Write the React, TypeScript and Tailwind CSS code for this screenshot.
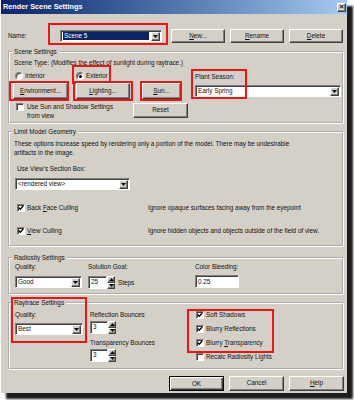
import type { ReactNode } from 'react'

const bevel =
  'bg-[#d4d0c8] border border-t-white border-l-white border-r-[#404040] border-b-[#404040] shadow-[inset_-1px_-1px_0_#808080]'
const sunken =
  'bg-white border border-t-[#808080] border-l-[#808080] border-r-white border-b-white shadow-[inset_1px_1px_0_#404040]'

function Red({ className }: { className: string }) {
  return <span className={`pointer-events-none absolute border-2 border-[#f01414] ${className}`} />
}

function Btn({ children, className = '' }: { children: ReactNode; className?: string }) {
  return <div className={`${bevel} flex items-center justify-center leading-none ${className}`}>{children}</div>
}

function Tri({ up = false }: { up?: boolean }) {
  return (
    <svg width="5" height="3" viewBox="0 0 5 3">
      <path d={up ? 'M0 3 L5 3 L2.5 0 Z' : 'M0 0 L5 0 L2.5 3 Z'} fill="#000" />
    </svg>
  )
}

function Combo({ value, className, selected = false }: { value: string; className: string; selected?: boolean }) {
  return (
    <div className={`${sunken} flex items-center pl-[2px] pr-[1px] ${className}`}>
      <span className={`flex-1 leading-[8px] ${selected ? 'bg-[#0a246a] text-white px-[1px] mr-[2px]' : ''}`}>{value}</span>
      <div className={`${bevel} w-[9px] h-[9px] flex items-center justify-center`}>
        <Tri />
      </div>
    </div>
  )
}

function Spin({ value, w = 'w-[18px]' }: { value: string; w?: string }) {
  return (
    <div className="flex h-[13px]">
      <div className={`${sunken} ${w} flex items-center pl-[2px] leading-none`}>{value}</div>
      <div className="flex w-[8px] flex-col">
        <div className={`${bevel} flex flex-1 items-center justify-center`}>
          <Tri up />
        </div>
        <div className={`${bevel} flex flex-1 items-center justify-center`}>
          <Tri />
        </div>
      </div>
    </div>
  )
}

function Check({ checked = false }: { checked?: boolean }) {
  return (
    <span className={`${sunken} flex h-[8px] w-[8px] shrink-0 items-center justify-center`}>
      {checked && (
        <svg width="6" height="6" viewBox="0 0 6 6">
          <path d="M0.8 2.6 L2.3 4.2 L5.2 1" stroke="#000" strokeWidth="1.3" fill="none" />
        </svg>
      )}
    </span>
  )
}

function Radio({ checked = false }: { checked?: boolean }) {
  return (
    <span className="flex h-[8px] w-[8px] shrink-0 items-center justify-center rounded-full border border-t-[#808080] border-l-[#808080] border-r-white border-b-white bg-white shadow-[inset_1px_1px_0_#404040]">
      {checked && <span className="h-[3px] w-[3px] rounded-full bg-black" />}
    </span>
  )
}

function Group({ title, className = '', children }: { title: string; className?: string; children: ReactNode }) {
  return (
    <fieldset className={`border-2 border-white [border-style:groove] pl-[4px] pr-[1px] ${className}`}>
      <legend className="-ml-[2px] px-[2px] leading-[8px]">{title}</legend>
      {children}
    </fieldset>
  )
}

export default function App() {
  return (
    <div className="h-[400px] w-[354px] overflow-hidden bg-white font-['Liberation_Sans',Arial,sans-serif] text-[6.35px] text-[#111]">
      <div className="flex h-[393px] w-[347px] flex-col border-l border-white bg-[#d4d0c8] shadow-[6px_6px_2px_#1c1c1c]">
        <div className="flex h-[14px] items-center bg-linear-to-r from-[#0a246a] to-[#a6caf0] pl-[2px] pr-[1px]">
          <span className="flex-1 text-[7.3px] font-bold text-white">Render Scene Settings</span>
          <div className={`${bevel} flex h-[9px] w-[9px] items-center justify-center text-[8px] font-bold leading-none`}>×</div>
        </div>

        <div className="flex flex-1 flex-col pl-[7px] pr-[3px]">
          <div className="mt-[15px] flex h-[14px] items-center">
            <span className="w-[52px]">Name:</span>
            <div className="relative">
              <Combo value="Scene 5" selected className="h-[12px] w-[102px]" />
              <Red className="-left-[12px] -right-[6px] -top-[7px] -bottom-[3px]" />
            </div>
            <div className="ml-[9px] flex gap-[5px]">
              <Btn className="h-[14px] w-[54px]"><span><u>N</u>ew...</span></Btn>
              <Btn className="h-[14px] w-[54px]"><span><u>R</u>ename</span></Btn>
              <Btn className="h-[14px] w-[54px]"><span><u>D</u>elete</span></Btn>
            </div>
          </div>

          <Group title="Scene Settings" className="mt-[5px] pb-[2px]">
            <div className="pt-[3px] leading-[8px]">Scene Type: (Modifies the effect of sunlight during raytrace.)</div>
            <div className="mt-[5px] flex">
              <div className="flex w-[181px] flex-col">
                <div className="flex h-[8px] items-center">
                  <span className="ml-[1px] flex w-[61px] items-center gap-[2px]">
                    <Radio />
                    Interior
                  </span>
                  <span className="relative flex items-center gap-[2px]">
                    <Radio checked />
                    Exterior
                    <Red className="-left-[4px] -right-[3px] -top-[6px] -bottom-[3px]" />
                  </span>
                </div>
                <div className="mt-[3px] flex h-[16px]">
                  <div className="relative -ml-[1px] w-[55px]">
                    <Btn className="h-full"><span><u>E</u>nvironment...</span></Btn>
                    <Red className="-left-[4px] -right-[1px] -top-[2px] -bottom-[2px]" />
                  </div>
                  <div className="relative ml-[8px] w-[54px]">
                    <Btn className="h-full"><span><u>L</u>ighting...</span></Btn>
                    <Red className="-left-[3px] -right-[3px] -top-[2px] -bottom-[2px]" />
                  </div>
                  <div className="relative ml-[12px] w-[39px]">
                    <Btn className="h-full"><span><u>S</u>un...</span></Btn>
                    <Red className="-left-[2px] -right-[1px] -top-[2px] -bottom-[2px]" />
                  </div>
                </div>
                <div className="mt-[3px] flex">
                  <div className="ml-[2px] mt-[1px]">
                    <Check />
                  </div>
                  <span className="ml-[3px] w-[90px] leading-[9px]">Use Sun and Shadow Settings from view</span>
                  <Btn className="ml-[16px] mt-[1px] h-[15px] w-[55px]">Reset</Btn>
                </div>
              </div>
              <div className="relative flex flex-1 flex-col pt-[1px]">
                <span className="leading-[8px]">Plant Season:</span>
                <Combo value="Early Spring" className="mt-[4px] h-[12px]" />
                <Red className="-left-[4px] -top-[3px] h-[30px] w-[56px]" />
              </div>
            </div>
          </Group>

          <Group title="Limit Model Geometry" className="mt-[4px] pb-[10px]">
            <div className="pt-[3px] leading-[9px]">
              <div>These options increase speed by rendering only a portion of the model. There may be undesirable</div>
              <div>artifacts in the image.</div>
            </div>
            <div className="mt-[8px] pl-[3px] leading-[8px]">Use View's Section Box:</div>
            <Combo value="<rendered view>" className="ml-[1px] mt-[5px] h-[12px] w-[115px]" />
            <div className="mt-[14px] flex h-[8px] items-center">
              <span className="ml-[3px] flex w-[131px] items-center gap-[2px]">
                <Check checked />
                <span>Back <u>F</u>ace Culling</span>
              </span>
              <span>Ignore opaque surfaces facing away from the eyepoint</span>
            </div>
            <div className="mt-[15px] flex h-[8px] items-center">
              <span className="ml-[3px] flex w-[131px] items-center gap-[2px]">
                <Check checked />
                <span><u>V</u>iew Culling</span>
              </span>
              <span>Ignore hidden objects and objects outside of the field of view.</span>
            </div>
          </Group>

          <Group title="Radiosity Settings" className="mt-[7px] pb-[4px]">
            <div className="flex pt-[1px]">
              <div className="ml-[1px] flex w-[73px] flex-col">
                <span className="leading-[8px]">Quality:</span>
                <Combo value="Good" className="mt-[5px] h-[12px] w-[67px]" />
              </div>
              <div className="flex w-[107px] flex-col">
                <span className="leading-[8px]">Solution Goal:</span>
                <div className="mt-[5px] flex items-center">
                  <Spin value="25" w="w-[19px]" />
                  <span className="ml-[3px]">Steps</span>
                </div>
              </div>
              <div className="flex flex-col">
                <span className="leading-[8px]">Color Bleeding:</span>
                <div className={`${sunken} mt-[4px] flex h-[13px] w-[44px] items-center pl-[2px]`}>0.25</div>
              </div>
            </div>
          </Group>

          <Group title="Raytrace Settings" className="mt-[4px] pb-[6px]">
            <div className="flex pt-[4px]">
              <div className="relative ml-[1px] flex w-[75px] flex-col self-start">
                <span className="leading-[8px]">Quality:</span>
                <Combo value="Best" className="mt-[4px] h-[12px] w-[68px]" />
                <Red className="-left-[4px] -top-[14px] h-[46px] w-[76px]" />
              </div>
              <div className="flex w-[106px] flex-col">
                <span className="leading-[8px]">Reflection Bounces</span>
                <div className="mt-[2px]">
                  <Spin value="3" />
                </div>
                <span className="mt-[5px] leading-[8px]">Transparency Bounces</span>
                <div className="mt-[2px]">
                  <Spin value="3" />
                </div>
              </div>
              <div className="flex flex-col gap-[6px]">
                <div className="relative flex flex-col gap-[6px]">
                  <span className="flex h-[8px] items-center gap-[2px]">
                    <Check checked />
                    Soft Shadows
                  </span>
                  <span className="flex h-[8px] items-center gap-[2px]">
                    <Check checked />
                    Blurry Reflections
                  </span>
                  <span className="flex h-[8px] items-center gap-[2px]">
                    <Check checked />
                    <span>Blurry <u>T</u>ransparency</span>
                  </span>
                  <Red className="-left-[9px] -top-[2px] -bottom-[6px] w-[87px]" />
                </div>
                <span className="flex h-[8px] items-center gap-[2px]">
                  <Check />
                  Recalc Radiosity Lights
                </span>
              </div>
            </div>
          </Group>

          <div className="mt-[6px] flex justify-end gap-[5px]">
            <div className="flex h-[15px] w-[55px] items-center justify-center border border-black bg-[#d4d0c8] shadow-[inset_1px_1px_0_white,inset_-1px_-1px_0_#404040,inset_-2px_-2px_0_#808080]">
              OK
            </div>
            <Btn className="h-[15px] w-[55px]">Cancel</Btn>
            <Btn className="h-[15px] w-[55px]"><span><u>H</u>elp</span></Btn>
          </div>
        </div>
      </div>
    </div>
  )
}
